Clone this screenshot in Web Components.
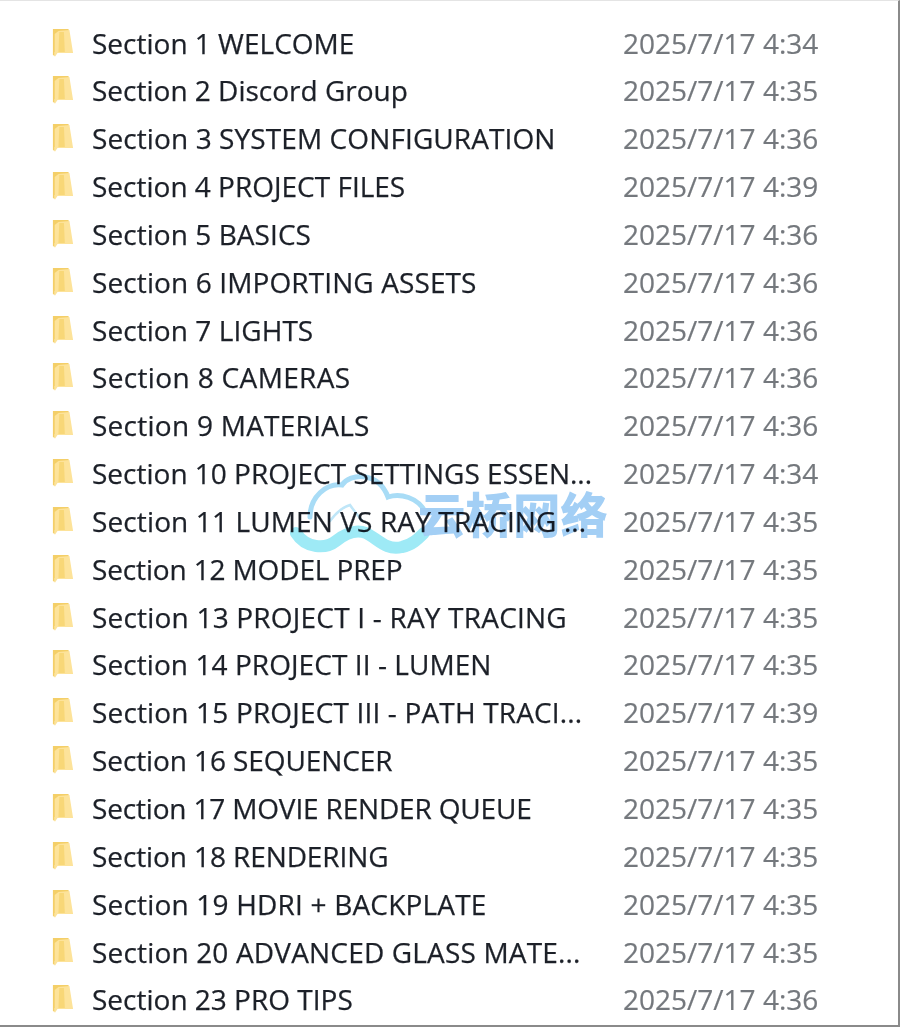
<!DOCTYPE html>
<html>
<head>
<meta charset="utf-8">
<style>
  html, body { margin: 0; height: 100%; background: #fff; }
</style>
</head>
<body>
<file-list>
  <folder-row name="Section 1 WELCOME" date="2025/7/17 4:34"></folder-row>
  <folder-row name="Section 2 Discord Group" date="2025/7/17 4:35"></folder-row>
  <folder-row name="Section 3 SYSTEM CONFIGURATION" date="2025/7/17 4:36" track="0.1"></folder-row>
  <folder-row name="Section 4 PROJECT FILES" date="2025/7/17 4:39"></folder-row>
  <folder-row name="Section 5 BASICS" date="2025/7/17 4:36" track="0.06"></folder-row>
  <folder-row name="Section 6 IMPORTING ASSETS" date="2025/7/17 4:36" track="0.11"></folder-row>
  <folder-row name="Section 7 LIGHTS" date="2025/7/17 4:36" track="0.06"></folder-row>
  <folder-row name="Section 8 CAMERAS" date="2025/7/17 4:36" track="0.35"></folder-row>
  <folder-row name="Section 9 MATERIALS" date="2025/7/17 4:36" track="0.26"></folder-row>
  <folder-row name="Section 10 PROJECT SETTINGS ESSEN..." date="2025/7/17 4:34"></folder-row>
  <folder-row name="Section 11 LUMEN VS RAY TRACING ..." date="2025/7/17 4:35" track="0.12"></folder-row>
  <folder-row name="Section 12 MODEL PREP" date="2025/7/17 4:35" track="-0.14"></folder-row>
  <folder-row name="Section 13 PROJECT I - RAY TRACING" date="2025/7/17 4:35" track="0.2"></folder-row>
  <folder-row name="Section 14 PROJECT II - LUMEN" date="2025/7/17 4:35" track="0.07"></folder-row>
  <folder-row name="Section 15 PROJECT III - PATH TRACI..." date="2025/7/17 4:39" track="0.16"></folder-row>
  <folder-row name="Section 16 SEQUENCER" date="2025/7/17 4:35" track="-0.1"></folder-row>
  <folder-row name="Section 17 MOVIE RENDER QUEUE" date="2025/7/17 4:35" track="-0.17"></folder-row>
  <folder-row name="Section 18 RENDERING" date="2025/7/17 4:35" track="-0.1"></folder-row>
  <folder-row name="Section 19 HDRI + BACKPLATE" date="2025/7/17 4:35" track="0.19"></folder-row>
  <folder-row name="Section 20 ADVANCED GLASS MATE..." date="2025/7/17 4:35" track="0.17"></folder-row>
  <folder-row name="Section 23 PRO TIPS" date="2025/7/17 4:36"></folder-row>
  <cloud-mark></cloud-mark>
</file-list>
<script>
const rowTemplate = document.createElement('template');
rowTemplate.innerHTML = `
  <style>
    :host {
      display: grid;
      grid-template-columns: 40px 531px auto;
      align-items: center;
      height: 47.85px;
    }
    svg { display: block; width: 22px; height: 30px; filter: blur(0.6px); }
    .name, .date { font-size: 28px; white-space: nowrap; filter: blur(0.35px); }
    .name { color: #1c2028; -webkit-text-stroke: 0.25px #1c2028; }
    .date { color: #74787d; -webkit-text-stroke: 0.2px #74787d; }
  </style>
  <svg viewBox="0 0 24 30" preserveAspectRatio="none">
    <path d="M1 1 L18 1 L21 24 L3 24 L3 28 L1 27 Z" fill="#f4cf68"/>
    <path d="M7 3 L19 2 L23 25 L6 25 L3 29 L3 6 Z" fill="#fde39a"/>
    <path d="M8 4 L13 4 L14 24 L7 24 Z" fill="#f8d777"/>
  </svg>
  <span class="name"></span>
  <span class="date"></span>
`;

class FolderRow extends HTMLElement {
  constructor() {
    super();
    this.attachShadow({ mode: 'open' }).appendChild(rowTemplate.content.cloneNode(true));
  }
  connectedCallback() {
    const name = this.shadowRoot.querySelector('.name');
    name.textContent = this.getAttribute('name');
    name.style.letterSpacing = (this.getAttribute('track') || 0) + 'px'; // hand fit to the reference widths
    this.shadowRoot.querySelector('.date').textContent = this.getAttribute('date');
  }
}
customElements.define('folder-row', FolderRow);

const listTemplate = document.createElement('template');
listTemplate.innerHTML = `
  <style>
    :host {
      display: block;
      position: relative;
      box-sizing: border-box;
      width: 900px;
      height: 1027px;
      padding: 17.6px 0 0 52px;
      background: #fff;
      border-top: 1px solid #e4e4e4;
      border-right: 2px solid #8a8a8a;
      border-bottom: 2px solid #8a8a8a;
      font-family: "Open Sans", "Noto Sans", sans-serif;
      overflow: hidden;
    }
  </style>
  <slot></slot>
`;

class FileList extends HTMLElement {
  constructor() {
    super();
    this.attachShadow({ mode: 'open' }).appendChild(listTemplate.content.cloneNode(true));
  }
}
customElements.define('file-list', FileList);

const markTemplate = document.createElement('template');
markTemplate.innerHTML = `
  <style>
    :host {
      position: absolute;
      left: 290px;
      top: 472px;
      display: flex;
      align-items: center;
      mix-blend-mode: multiply;
      filter: blur(0.6px);
    }
    svg { display: block; width: 140px; height: 82px; margin-right: -12px; }
    span {
      font: 900 47.5px "Noto Sans CJK SC", sans-serif;
      color: #a3cff5;
      margin-top: -4px;
    }
  </style>
  <svg viewBox="0 0 140 82" fill="none">
    <path d="M20 44 C20 24 36 10 52 12 C60 0 88 -2 98 24 C110 20 128 24 136 40" stroke="#a8dcf6" stroke-width="5" stroke-linecap="round"/>
    <path d="M40 48 C46 40 52 34 60 32 C64 38 68 42 72 48" stroke="#bfe6f8" stroke-width="2.5" stroke-linecap="round"/>
    <path d="M6 60 C16 76 36 76 46 68 C56 60 66 56 76 60 C88 66 96 78 112 74 C122 72 128 66 134 60" stroke="#9eeaf6" stroke-width="12" stroke-linecap="round"/>
  </svg>
  <span>云桥网络</span>
`;

class CloudMark extends HTMLElement {
  constructor() {
    super();
    this.attachShadow({ mode: 'open' }).appendChild(markTemplate.content.cloneNode(true));
  }
}
customElements.define('cloud-mark', CloudMark);
</script>
</body>
</html>
